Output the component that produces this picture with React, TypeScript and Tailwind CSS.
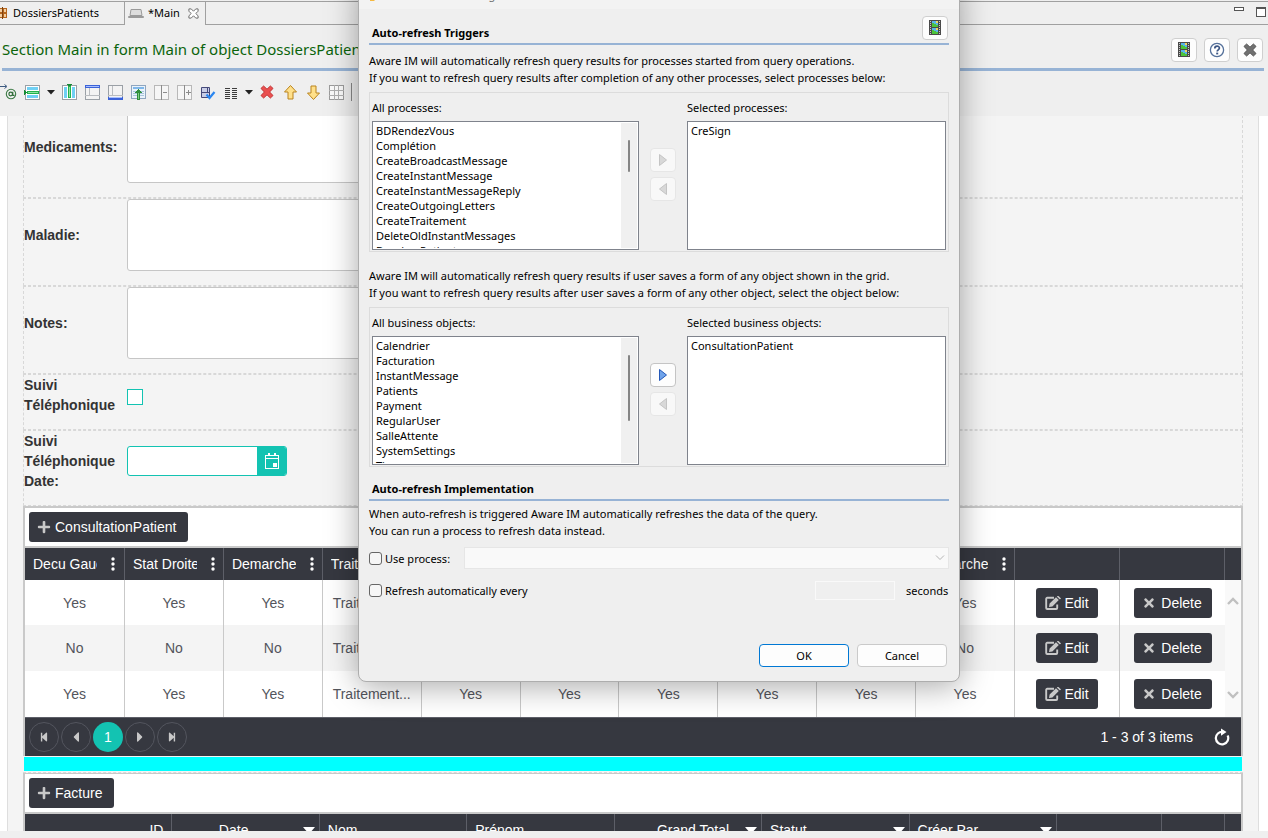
import React, { useState } from 'react';
import { FaPlus, FaTimes, FaStepBackward, FaStepForward, FaCaretLeft, FaCaretRight } from 'react-icons/fa';

type IconProps = { className?: string };

const FilmIcon = ({ className = 'h-4 w-4' }: IconProps) => (
  <svg viewBox="0 0 16 16" className={className} shapeRendering="crispEdges" aria-hidden="true">
    <rect x="2" y="0" width="12" height="15" fill="#4a4a4a" />
    <rect x="5" y="1" width="6" height="6" fill="#58b4e8" />
    <path d="M5 3h2v1h2v1h2v2H5z" fill="#4cc43a" />
    <rect x="9" y="1" width="2" height="2" fill="#f3d35a" />
    <rect x="5" y="8" width="6" height="6" fill="#58b4e8" />
    <path d="M5 10h2v1h2v1h2v2H5z" fill="#4cc43a" />
    <rect x="9" y="8" width="2" height="2" fill="#f3d35a" />
    <path d="M3 1h1v1H3zM3 3h1v1H3zM3 5h1v1H3zM3 7h1v1H3zM3 9h1v1H3zM3 11h1v1H3zM3 13h1v1H3zM12 1h1v1h-1zM12 3h1v1h-1zM12 5h1v1h-1zM12 7h1v1h-1zM12 9h1v1h-1zM12 11h1v1h-1zM12 13h1v1h-1z" fill="#c8c8c8" />
  </svg>
);

const HelpIcon = () => (
  <svg viewBox="0 0 16 16" className="h-4 w-4" aria-hidden="true">
    <circle cx="8" cy="8" r="6.6" fill="#fff" stroke="#54709a" strokeWidth="1.3" />
    <path d="M5.8 6.4c0-3 4.6-3 4.6-.3 0 1.7-2.2 1.7-2.2 3.3" fill="none" stroke="#3c5684" strokeWidth="1.7" />
    <rect x="7.2" y="10.6" width="2" height="1.8" fill="#3c5684" />
  </svg>
);

const CrossIcon = ({ fill, stroke }: { fill: string; stroke: string }) => (
  <svg viewBox="0 0 16 16" className="h-4 w-4" aria-hidden="true">
    <path
      d="M4.6 2 8 5.2 11.4 2 14 4.4 10.6 8 14 11.5 11.4 14 8 10.8 4.6 14 2 11.5 5.4 8 2 4.4z"
      fill={fill}
      stroke={stroke}
      strokeWidth="1"
      strokeLinejoin="round"
    />
  </svg>
);

const Glyph = ({ children }: { children: React.ReactNode }) => (
  <svg viewBox="0 0 17 17" className="h-[17px] w-[17px]" shapeRendering="crispEdges" aria-hidden="true">
    {children}
  </svg>
);

const frame = '#9aa0a6';

const toolbar: { name: string; caret?: boolean; icon: React.ReactNode }[] = [
  {
    name: 'Insert row',
    caret: true,
    icon: (
      <Glyph>
        <rect x="1.5" y="1.5" width="14" height="14" fill="#fff" stroke={frame} />
        <rect x="3" y="3" width="11" height="3" fill="#6fd0f4" />
        <rect x="3" y="11" width="11" height="3" fill="#6fd0f4" />
        <rect x="3" y="7" width="12" height="3" fill="#22b14c" />
        <rect x="4" y="8" width="10" height="1" fill="#8fe3a4" />
        <path d="M0 6h1v1h1v1h1v1H2v1H1v1H0z" fill="#168a35" />
      </Glyph>
    ),
  },
  {
    name: 'Insert column',
    icon: (
      <Glyph>
        <rect x="1.5" y="1.5" width="14" height="14" fill="#fff" stroke={frame} />
        <rect x="3" y="3" width="3" height="11" fill="#6fd0f4" />
        <rect x="11" y="3" width="3" height="11" fill="#6fd0f4" />
        <rect x="7" y="2" width="3" height="12" fill="#22b14c" />
        <rect x="8" y="3" width="1" height="10" fill="#8fe3a4" />
        <path d="M6 0h5v1h-1v1H7V1H6z" fill="#168a35" />
      </Glyph>
    ),
  },
  {
    name: 'Header row',
    icon: (
      <Glyph>
        <rect x="1.5" y="1.5" width="14" height="14" fill="#f3f3f3" stroke={frame} />
        <path d="M1 11.5h15M5.5 4v8" stroke="#b9bcc0" />
        <rect x="1" y="1" width="15" height="3" fill="#3b62d8" />
        <rect x="2" y="2" width="13" height="1" fill="#a9c0ff" />
      </Glyph>
    ),
  },
  {
    name: 'Footer row',
    icon: (
      <Glyph>
        <rect x="1.5" y="1.5" width="14" height="14" fill="#f3f3f3" stroke={frame} />
        <path d="M1 11.5h15M5.5 2v10" stroke="#b9bcc0" />
        <rect x="1" y="13" width="15" height="3" fill="#3b62d8" />
        <rect x="2" y="13" width="13" height="1" fill="#a9c0ff" />
      </Glyph>
    ),
  },
  {
    name: 'Move up a level',
    icon: (
      <Glyph>
        <rect x="1.5" y="1.5" width="14" height="13" fill="#eaf3fb" stroke="#8fa6bf" />
        <rect x="3" y="3" width="11" height="2" fill="#7fb7ea" />
        <path d="M3 7.5h11M3 9.5h11M3 11.5h11" stroke="#a8c5dd" />
        <path d="M8 5h1v1h1v1h1v1h1v1h-2v7H7V9H5V8h1V7h1V6h1z" fill="#2f8f3c" />
        <rect x="8" y="9" width="1" height="6" fill="#7fce84" />
      </Glyph>
    ),
  },
  {
    name: 'Merge cells',
    icon: (
      <Glyph>
        <rect x="1.5" y="1.5" width="14" height="14" fill="#f6f6f6" stroke="#b8b8b8" />
        <path d="M8.5 1v15M10 8.5h4" stroke="#8c8c8c" />
      </Glyph>
    ),
  },
  {
    name: 'Split cells',
    icon: (
      <Glyph>
        <rect x="1.5" y="1.5" width="14" height="14" fill="#f6f6f6" stroke="#b8b8b8" />
        <path d="M8.5 1v15M10 8.5h5M12.5 6v5" stroke="#8c8c8c" />
      </Glyph>
    ),
  },
  {
    name: 'Form settings',
    icon: (
      <svg viewBox="0 0 17 17" className="h-[17px] w-[17px]" aria-hidden="true">
        <path d="M2.5 3.5h8v10h-8zM2.5 8.5h8M8.5 3.5v5" fill="#c9cde6" stroke="#44497a" />
        <path d="M7.5 10.5l3 3.5 5-6" fill="none" stroke="#2a86f0" strokeWidth="2.2" />
      </svg>
    ),
  },
  {
    name: 'Columns',
    caret: true,
    icon: (
      <Glyph>
        <path d="M3 4.5h5M3 6.5h5M3 8.5h5M3 10.5h5M3 12.5h5M3 14.5h5M10 4.5h5M10 6.5h5M10 8.5h5M10 10.5h5M10 12.5h5M10 14.5h5" stroke="#3c3c3c" />
      </Glyph>
    ),
  },
  { name: 'Delete', icon: <CrossIcon fill="#ea5050" stroke="#c23434" /> },
  {
    name: 'Move up',
    icon: (
      <svg viewBox="0 0 17 17" className="h-[17px] w-[17px]" aria-hidden="true">
        <path d="M8.5 1.5l6 6.5h-3.500v7h-5v-7H2.5z" fill="#ffe08a" stroke="#b9831c" strokeLinejoin="round" />
      </svg>
    ),
  },
  {
    name: 'Move down',
    icon: (
      <svg viewBox="0 0 17 17" className="h-[17px] w-[17px]" aria-hidden="true">
        <path d="M8.5 15.5l6-6.500h-3.500V2h-5v7H2.5z" fill="#ffe08a" stroke="#b9831c" strokeLinejoin="round" />
      </svg>
    ),
  },
  {
    name: 'Grid',
    icon: (
      <Glyph>
        <rect x="1.5" y="1.5" width="14" height="14" fill="#fbfbfb" stroke="#9c9c9c" />
        <path d="M6.5 1v15M10.5 1v15M1 6.5h15M1 11.5h15" stroke="#b0b0b0" />
      </Glyph>
    ),
  },
];

const Caret = () => (
  <svg viewBox="0 0 8 5" className="h-[5px] w-2" aria-hidden="true">
    <path d="M0 0h8L4 4.5z" fill="#222" />
  </svg>
);

function WindowButton({ label, children }: { label: string; children: React.ReactNode }) {
  return (
    <button
      type="button"
      aria-label={label}
      className="flex h-6 w-[26px] items-center justify-center rounded border border-[#cfcfcf] bg-[#fdfdfd]"
    >
      {children}
    </button>
  );
}

function EditorChrome() {
  return (
    <header className="shrink-0 font-['Noto_Sans',sans-serif] text-black">
      <nav className="mt-px flex h-6 border-t border-[#a0a0a0] text-[11px]">
        <button type="button" className="flex w-[125px] items-center gap-[5px] border-b border-r border-[#a0a0a0] text-left">
          <svg viewBox="0 0 8 12" className="h-3 w-2" shapeRendering="crispEdges" aria-hidden="true">
            <rect x="0" y="1" width="7" height="10" fill="#b5651d" />
            <path d="M0 2h2v3H0zM4 2h2v3H4zM0 7h2v3H0zM4 7h2v3H4z" fill="#f4cfa0" />
            <rect x="2" y="0" width="1" height="12" fill="#7d4210" />
          </svg>
          DossiersPatients
        </button>
        <button type="button" className="flex w-[81px] items-center gap-1 border-r border-[#a0a0a0] pl-[3px]">
          <svg viewBox="0 0 16 10" className="h-2.5 w-4" aria-hidden="true">
            <path d="M3 .5h10l1 6H2z" fill="#ddd" stroke="#9a9a9a" />
            <path d="M.5 7.5h15v1H.5z" fill="#ccc" stroke="#9a9a9a" />
          </svg>
          <span className="flex-1 text-left">*Main</span>
          <svg viewBox="0 0 12 12" className="mr-1.5 h-[11px] w-[11px]" aria-hidden="true">
            <path d="M1 1h2.500L6 3.500 8.500 1H11v2.500L8.500 6 11 8.500V11H8.500L6 8.500 3.500 11H1V8.500L3.500 6 1 3.500z" fill="#fff" stroke="#666" />
          </svg>
        </button>
        <div className="flex flex-1 items-start justify-end gap-3 border-b border-[#a0a0a0] pr-0.5 pt-[5px]">
          <button type="button" aria-label="Minimize" className="h-1 w-2.5 border border-[#555] bg-white" />
          <button type="button" aria-label="Maximize" className="h-2.5 w-2.5 border border-t-2 border-[#555] bg-white" />
        </div>
      </nav>
      <div className="ml-0.5 mr-1 flex h-[46px] items-center border-b-[3px] border-[#97b3d5]">
        <h1 className="flex-1 truncate pt-1.5 text-[15px] text-[#0b640b]">
          Section Main in form Main of object DossiersPatients
        </h1>
        <div className="flex gap-[7px] pr-px pt-1.5">
          <WindowButton label="Video help">
            <FilmIcon />
          </WindowButton>
          <WindowButton label="Help">
            <HelpIcon />
          </WindowButton>
          <WindowButton label="Close">
            <CrossIcon fill="#707070" stroke="#555" />
          </WindowButton>
        </div>
      </div>
      <div className="flex h-[45px] items-center gap-1.5 pb-[3px]">
        <button type="button" aria-label="Insert field" className="w-[18px]">
          <svg viewBox="0 0 18 18" className="h-[18px] w-[18px]" aria-hidden="true">
            <path d="M0 3.5h6M4.5 1.5l2.500 2-2.500 2" fill="none" stroke="#3d5a80" />
            <circle cx="11" cy="11" r="4.7" fill="none" stroke="#3c7a45" strokeWidth="1.1" />
            <circle cx="10.7" cy="11" r="1.8" fill="none" stroke="#2c6a35" strokeWidth="1.2" />
            <path d="M12.8 8.8v3.600h1.700" fill="none" stroke="#2c6a35" strokeWidth="1.1" />
          </svg>
        </button>
        {toolbar.map((t) => (
          <React.Fragment key={t.name}>
            <button type="button" aria-label={t.name} className="w-[17px]">
              {t.icon}
            </button>
            {t.caret && (
              <button type="button" aria-label={t.name + ' options'}>
                <Caret />
              </button>
            )}
          </React.Fragment>
        ))}
        <span className="h-[18px] w-px bg-[#888]" />
      </div>
    </header>
  );
}

const rowClass = 'flex border border-dashed border-[#d8d8d8] pb-3.5';
const labelClass = 'flex w-[103px] shrink-0 items-center text-sm leading-5 font-bold text-[#333]';

function TextRow({ id, label }: { id: string; label: string }) {
  return (
    <div className={rowClass}>
      <label htmlFor={id} className={labelClass}>
        {label}
      </label>
      <textarea id={id} className="h-[72px] w-[600px] resize-none rounded-[3px] border border-[#c6c6c6] bg-white" />
    </div>
  );
}

function DarkButton({ children, className = '' }: { children: React.ReactNode; className?: string }) {
  return (
    <button
      type="button"
      className={'inline-flex h-[30px] items-center rounded-[3px] bg-[#363840] text-sm text-white ' + className}
    >
      {children}
    </button>
  );
}

const EditIcon = () => (
  <svg viewBox="0 0 16 14" className="h-3.5 w-4 shrink-0" aria-hidden="true">
    <path d="M9 1.8H2.2a1 1 0 0 0-1 1V12a1 1 0 0 0 1 1h9a1 1 0 0 0 1-1V8.5" fill="none" stroke="#c8c8c8" strokeWidth="1.9" />
    <path d="M4.6 7.6 11 1.200 13.8 4 7.4 10.400 4 11zM11.800.4l.8-.4h.9L15.800 2.300v.8L14.600 3.300z" fill="#c8c8c8" />
  </svg>
);

const columns = ['Decu Gauche', 'Stat Droite', 'Demarche', 'Traitement', 'Decu', 'Stat', 'Gauche', 'Droite', 'Suivi', 'Demarche'];
const rows = ['Yes', 'No', 'Yes'];

const thClass = 'border-r border-[#5d5f68] px-2 font-normal';

const Chevron = ({ d }: { d: string }) => (
  <svg viewBox="0 0 12 9" className="h-[9px] w-3" aria-hidden="true">
    <path d={d} fill="none" stroke="#c0c0c0" strokeWidth="2.4" />
  </svg>
);

function ConsultationGrid() {
  return (
    <section className="border-2 border-b-0 border-[#c9c9c9] bg-white">
      <div className="flex h-10 items-center border-b-2 border-[#c9c9c9] px-1">
        <DarkButton className="gap-1 pl-2 pr-3">
          <FaPlus className="h-3.5 w-3.5 text-[#c8c8c8]" />
          ConsultationPatient
        </DarkButton>
      </div>
      <table className="w-full table-fixed border-separate border-spacing-0 text-sm text-[#53555c]">
        <colgroup>
          {columns.map((c, i) => (
            <col key={i} className={i === 0 ? 'w-[100px]' : ''} />
          ))}
          <col className="w-[105px]" />
          <col className="w-[105px]" />
          <col className="w-4" />
        </colgroup>
        <thead>
          <tr className="h-8 bg-[#363840] text-white">
            {columns.map((c, i) => (
              <th key={i} className={thClass}>
                <div className="flex items-center">
                  <span className="w-16 shrink-0 overflow-hidden text-left whitespace-nowrap">{c}</span>
                  <svg viewBox="0 0 4 14" className="ml-3.5 h-3.5 w-1 shrink-0" aria-hidden="true">
                    <circle cx="2" cy="2" r="1.7" fill="#fff" />
                    <circle cx="2" cy="7" r="1.7" fill="#fff" />
                    <circle cx="2" cy="12" r="1.7" fill="#fff" />
                  </svg>
                </div>
              </th>
            ))}
            <th className={thClass} />
            <th className={thClass} />
            <th />
          </tr>
        </thead>
        <tbody>
          {rows.map((v, r) => (
            <tr key={r} className={r === 1 ? 'h-[46px] bg-[#f4f4f4]' : r === 0 ? 'h-[45px] bg-white' : 'h-[46px] bg-white'}>
              {columns.map((c, i) => (
                <td key={i} className="truncate border-r border-[#c9c9c9] px-2 text-center">
                  {c === 'Traitement' ? 'Traitement...' : v}
                </td>
              ))}
              <td className="border-r border-[#c9c9c9] p-0 text-center">
                <DarkButton className="w-[62px] justify-center gap-[3px] align-middle">
                  <EditIcon />
                  Edit
                </DarkButton>
              </td>
              <td className="p-0 text-center">
                <DarkButton className="w-[78px] justify-center gap-1.5 align-middle">
                  <FaTimes className="h-3.5 w-3 text-[#c8c8c8]" />
                  Delete
                </DarkButton>
              </td>
              {r === 0 && (
                <td rowSpan={3} className="bg-[#f9f9f9] p-0 align-top">
                  <div className="flex h-[136px] flex-col items-center justify-between py-[17px]">
                    <Chevron d="M1 7l5-5 5 5" />
                    <Chevron d="M1 2l5 5 5-5" />
                  </div>
                </td>
              )}
            </tr>
          ))}
        </tbody>
      </table>
      <div className="flex h-[39px] items-center gap-0.5 border-t border-[#5d5f68] bg-[#363840] px-1 text-sm text-white">
        <PagerButton label="First page">
          <FaStepBackward className="h-2.5 w-2.5" />
        </PagerButton>
        <PagerButton label="Previous page">
          <FaCaretLeft className="h-4 w-4" />
        </PagerButton>
        <button type="button" className="h-[30px] w-[30px] rounded-full bg-[#13c3b2] text-sm">
          1
        </button>
        <PagerButton label="Next page">
          <FaCaretRight className="h-4 w-4" />
        </PagerButton>
        <PagerButton label="Last page">
          <FaStepForward className="h-2.5 w-2.5" />
        </PagerButton>
        <span className="ml-auto">1 - 3 of 3 items</span>
        <button type="button" aria-label="Refresh" className="ml-[18px] mr-1.5">
          <svg viewBox="0 0 18 18" className="h-[18px] w-[18px]" aria-hidden="true">
            <path d="M10 4a6.200 6.200 0 1 0 4.600 3.400" fill="none" stroke="#fff" strokeWidth="2.2" />
            <path d="M8 .5 13.500 4 8 7.800z" fill="#fff" />
          </svg>
        </button>
      </div>
    </section>
  );
}

function PagerButton({ label, children }: { label: string; children: React.ReactNode }) {
  return (
    <button
      type="button"
      aria-label={label}
      className="flex h-[30px] w-[30px] items-center justify-center rounded-full border border-[#53555e] text-[#c8c8c8]"
    >
      {children}
    </button>
  );
}

const invoiceColumns: { name: string; align: string; sort: boolean }[] = [
  { name: 'ID', align: 'flex-1 text-right', sort: false },
  { name: 'Date', align: 'flex-1 pr-4 text-center', sort: true },
  { name: 'Nom', align: 'flex-1 text-left', sort: false },
  { name: 'Prénom', align: 'flex-1 text-left', sort: false },
  { name: 'Grand Total', align: 'flex-1 pr-4 text-right', sort: true },
  { name: 'Statut', align: 'flex-1 text-left', sort: true },
  { name: 'Créer Par', align: 'flex-1 text-left', sort: true },
];

function InvoiceGrid() {
  return (
    <section className="border-2 border-t-0 border-[#c9c9c9] bg-white">
      <div className="flex h-10 items-center border-b-2 border-[#c9c9c9] px-1">
        <DarkButton className="gap-1 pl-2 pr-3">
          <FaPlus className="h-3.5 w-3.5 text-[#c8c8c8]" />
          Facture
        </DarkButton>
      </div>
      <table className="w-full table-fixed border-separate border-spacing-0 text-sm">
        <colgroup>
          {invoiceColumns.map((c) => (
            <col key={c.name} />
          ))}
          <col className="w-[105px]" />
          <col className="w-[63px]" />
          <col className="w-4" />
        </colgroup>
        <thead>
          <tr className="h-8 bg-[#363840] text-white">
            {invoiceColumns.map((c) => (
              <th key={c.name} className={thClass}>
                <div className="flex items-center">
                  <span className={c.align}>{c.name}</span>
                  {c.sort && (
                    <svg viewBox="0 0 12 7" className="-mr-1 h-[7px] w-3" aria-hidden="true">
                      <path d="M0 0h12L6 7z" fill="#fff" />
                    </svg>
                  )}
                </div>
              </th>
            ))}
            <th className={thClass} />
            <th className={thClass} />
            <th />
          </tr>
        </thead>
      </table>
    </section>
  );
}

function FormPage() {
  const [called, setCalled] = useState(false);
  return (
    <main className="mb-[7px] min-h-0 flex-1 overflow-hidden bg-white pl-[7px] pr-[9px] font-['Liberation_Sans',Arial,sans-serif]">
      <div className="border-x border-[#dedede] bg-[#f4f4f4] px-[15px]">
        <div className="-mt-1.5">
          <TextRow id="medicaments" label="Medicaments:" />
          <TextRow id="maladie" label="Maladie:" />
          <TextRow id="notes" label="Notes:" />
          <div className={rowClass}>
            <label htmlFor="suivi" className={labelClass}>
              Suivi Téléphonique
            </label>
            <input
              id="suivi"
              type="checkbox"
              checked={called}
              onChange={(e) => setCalled(e.target.checked)}
              className="mt-1 h-4 w-4 appearance-none self-center border border-[#13c3b2] bg-white checked:bg-[#13c3b2]"
            />
          </div>
          <div className={rowClass}>
            <label htmlFor="suivi-date" className={labelClass}>
              Suivi Téléphonique Date:
            </label>
            <div className="flex h-[30px] w-40 self-center overflow-hidden rounded-[3px] border border-[#13c3b2] bg-white">
              <input id="suivi-date" type="text" className="min-w-0 flex-1 px-2 text-sm outline-none" />
              <button type="button" aria-label="Open calendar" className="flex w-[29px] items-center justify-center bg-[#13c3b2]">
                <svg viewBox="0 0 16 16" className="h-4 w-4" shapeRendering="crispEdges" aria-hidden="true">
                  <path d="M1.5 2.5h13v13h-13zM1 5.5h14" fill="none" stroke="#fff" />
                  <path d="M4 0h2v3H4zM10 0h2v3h-2z" fill="#fff" />
                  <rect x="9" y="10" width="4" height="4" fill="#fff" />
                </svg>
              </button>
            </div>
          </div>
          <ConsultationGrid />
          <div className="mx-px mt-px h-3.5 bg-[#00ffff]" />
          <div className="mt-px border-t border-dashed border-[#d8d8d8]" />
          <div className="border-t border-[#c9c9c9]" />
          <InvoiceGrid />
        </div>
      </div>
    </main>
  );
}

const PlayIcon = ({ dir, active }: { dir: 'left' | 'right'; active: boolean }) => (
  <svg viewBox="0 0 8 12" className="h-3 w-2" aria-hidden="true">
    <path
      d={dir === 'right' ? 'M.5.5 7.5 6 .5 11.5z' : 'M7.5.5.5 6 7.5 11.5z'}
      fill={active ? '#6fa3ea' : '#d8d8d8'}
      stroke={active ? '#2458b8' : '#c4c4c4'}
      strokeWidth="1"
    />
  </svg>
);

function TransferButton({ dir, active, label }: { dir: 'left' | 'right'; active: boolean; label: string }) {
  return (
    <button
      type="button"
      aria-label={label}
      disabled={!active}
      className={
        'flex h-6 w-[26px] items-center justify-center rounded border ' +
        (active ? 'border-[#c4c4c4] bg-[#fdfdfd]' : 'border-[#e6e6e6] bg-[#f8f8f8]')
      }
    >
      <PlayIcon dir={dir} active={active} />
    </button>
  );
}

function ListBox({ id, items, thumb }: { id: string; items: string[]; thumb?: string }) {
  return (
    <div className="flex h-[129px] border border-[#7f838c] bg-white p-px">
      <ul role="listbox" aria-labelledby={id} className="flex-1 overflow-hidden pl-0.5 leading-[15px]">
        {items.map((it) => (
          <li key={it} role="option" aria-selected="false">
            {it}
          </li>
        ))}
      </ul>
      {thumb && (
        <div className="flex w-4 justify-center bg-[#f0f0f0] pt-[17px]">
          <span className={'w-0.5 rounded bg-[#858585] ' + thumb} />
        </div>
      )}
    </div>
  );
}

type TransferProps = {
  name: string;
  all: string;
  selected: string;
  items: string[];
  chosen: string[];
  thumb: string;
  canAdd: boolean;
};

function Transfer({ name, all, selected, items, chosen, thumb, canAdd }: TransferProps) {
  return (
    <div className="mt-1.5 flex border border-[#dcdcdc] px-0.5 pb-px">
      <div className="w-[267px]">
        <div id={name + '-all'} className="pt-0.5 leading-[26px]">
          {all}
        </div>
        <ListBox id={name + '-all'} items={items} thumb={thumb} />
      </div>
      <div className="flex w-12 flex-col items-center gap-[5px] pt-[55px]">
        <TransferButton dir="right" active={canAdd} label={'Add to ' + name} />
        <TransferButton dir="left" active={false} label={'Remove from ' + name} />
      </div>
      <div className="flex-1">
        <div id={name + '-selected'} className="pt-0.5 leading-[26px]">
          {selected}
        </div>
        <ListBox id={name + '-selected'} items={chosen} />
      </div>
    </div>
  );
}

const processes = [
  'BDRendezVous',
  'Complétion',
  'CreateBroadcastMessage',
  'CreateInstantMessage',
  'CreateInstantMessageReply',
  'CreateOutgoingLetters',
  'CreateTraitement',
  'DeleteOldInstantMessages',
  'DossiersPatients',
];

const objects = [
  'Calendrier',
  'Facturation',
  'InstantMessage',
  'Patients',
  'Payment',
  'RegularUser',
  'SalleAttente',
  'SystemSettings',
  'Times',
];

function AutoRefreshDialog() {
  return (
    <div
      role="dialog"
      aria-labelledby="dialog-title"
      className="absolute -top-[22px] left-[358px] w-[602px] rounded-lg border border-[#adadad] bg-[#efefef] font-['Noto_Sans',sans-serif] text-[11px] leading-[17px] whitespace-nowrap text-black shadow-[0_4px_32px_rgba(0,0,0,0.35)]"
    >
      <div className="flex h-[30px] items-center gap-1.5 rounded-t-lg bg-[#f3f3f3] px-2.5">
        <svg viewBox="0 0 16 16" className="h-4 w-4" aria-hidden="true">
          <path d="M1 15V11L11 1l4 4L5 15z" fill="#f5b942" />
        </svg>
        <span id="dialog-title" className="text-[#777]">
          Auto-refresh Settings
        </span>
      </div>
      <div className="px-2.5 pb-3.5">
        <div className="flex items-end justify-between border-b-2 border-[#97b3d5] pb-0.5 pt-[7px]">
          <h2 className="pl-[3px] leading-4 font-bold">Auto-refresh Triggers</h2>
          <div className="h-[25px] pr-px">
            <WindowButton label="Video help">
              <FilmIcon />
            </WindowButton>
          </div>
        </div>
        <p className="pt-[7px]">
          Aware IM will automatically refresh query results for processes started from query operations.
          <br />
          If you want to refresh query results after completion of any other processes, select processes below:
        </p>
        <Transfer
          name="processes"
          all="All processes:"
          selected="Selected processes:"
          items={processes}
          chosen={['CreSign']}
          thumb="h-8"
          canAdd={false}
        />
        <p className="pt-[15px]">
          Aware IM will automatically refresh query results if user saves a form of any object shown in the grid.
          <br />
          If you want to refresh query results after user saves a form of any other object, select the object below:
        </p>
        <Transfer
          name="objects"
          all="All business objects:"
          selected="Selected business objects:"
          items={objects}
          chosen={['ConsultationPatient']}
          thumb="h-[66px]"
          canAdd
        />
        <h2 className="border-b-2 border-[#97b3d5] pb-0.5 pl-[3px] pt-3.5 leading-4 font-bold">
          Auto-refresh Implementation
        </h2>
        <p className="pt-1">
          When auto-refresh is triggered Aware IM automatically refreshes the data of the query.
          <br />
          You can run a process to refresh data instead.
        </p>
        <div className="mt-2 flex items-center">
          <label className="flex w-[95px] items-center gap-[3px]">
            <input type="checkbox" className="h-[13px] w-[13px] appearance-none rounded-[3px] border border-[#666] bg-[#f6f6f6]" />
            Use process:
          </label>
          <div className="relative flex flex-1">
            <select
              aria-label="Process"
              disabled
              className="h-[22px] flex-1 appearance-none border border-[#e6e6e6] bg-[#f9f9f9]"
            />
            <svg viewBox="0 0 10 6" className="absolute right-1 top-2 h-1.5 w-2.5" aria-hidden="true">
              <path d="M1 .5l4 4 4-4" fill="none" stroke="#b4b4b4" />
            </svg>
          </div>
        </div>
        <div className="mt-[11px] flex h-5 items-center">
          <label className="flex flex-1 items-center gap-[3px]">
            <input type="checkbox" className="h-[13px] w-[13px] appearance-none rounded-[3px] border border-[#666] bg-[#f6f6f6]" />
            Refresh automatically every
          </label>
          <input
            type="text"
            aria-label="Refresh interval"
            disabled
            className="mr-[11px] h-[19px] w-20 border border-[#f9f9f9] bg-[#efefef]"
          />
          <span className="w-[43px]">seconds</span>
        </div>
        <div className="mt-11 flex justify-end gap-2 pr-0.5">
          <button type="button" className="h-[23px] w-[90px] rounded border border-[#0078d4] bg-[#fdfdfd]">
            OK
          </button>
          <button type="button" className="h-[23px] w-[90px] rounded border border-[#cacaca] bg-[#fdfdfd]">
            Cancel
          </button>
        </div>
      </div>
    </div>
  );
}

export default function App() {
  return (
    <div className="relative flex h-screen flex-col overflow-hidden bg-[#efefef]">
      <EditorChrome />
      <FormPage />
      <AutoRefreshDialog />
    </div>
  );
}
